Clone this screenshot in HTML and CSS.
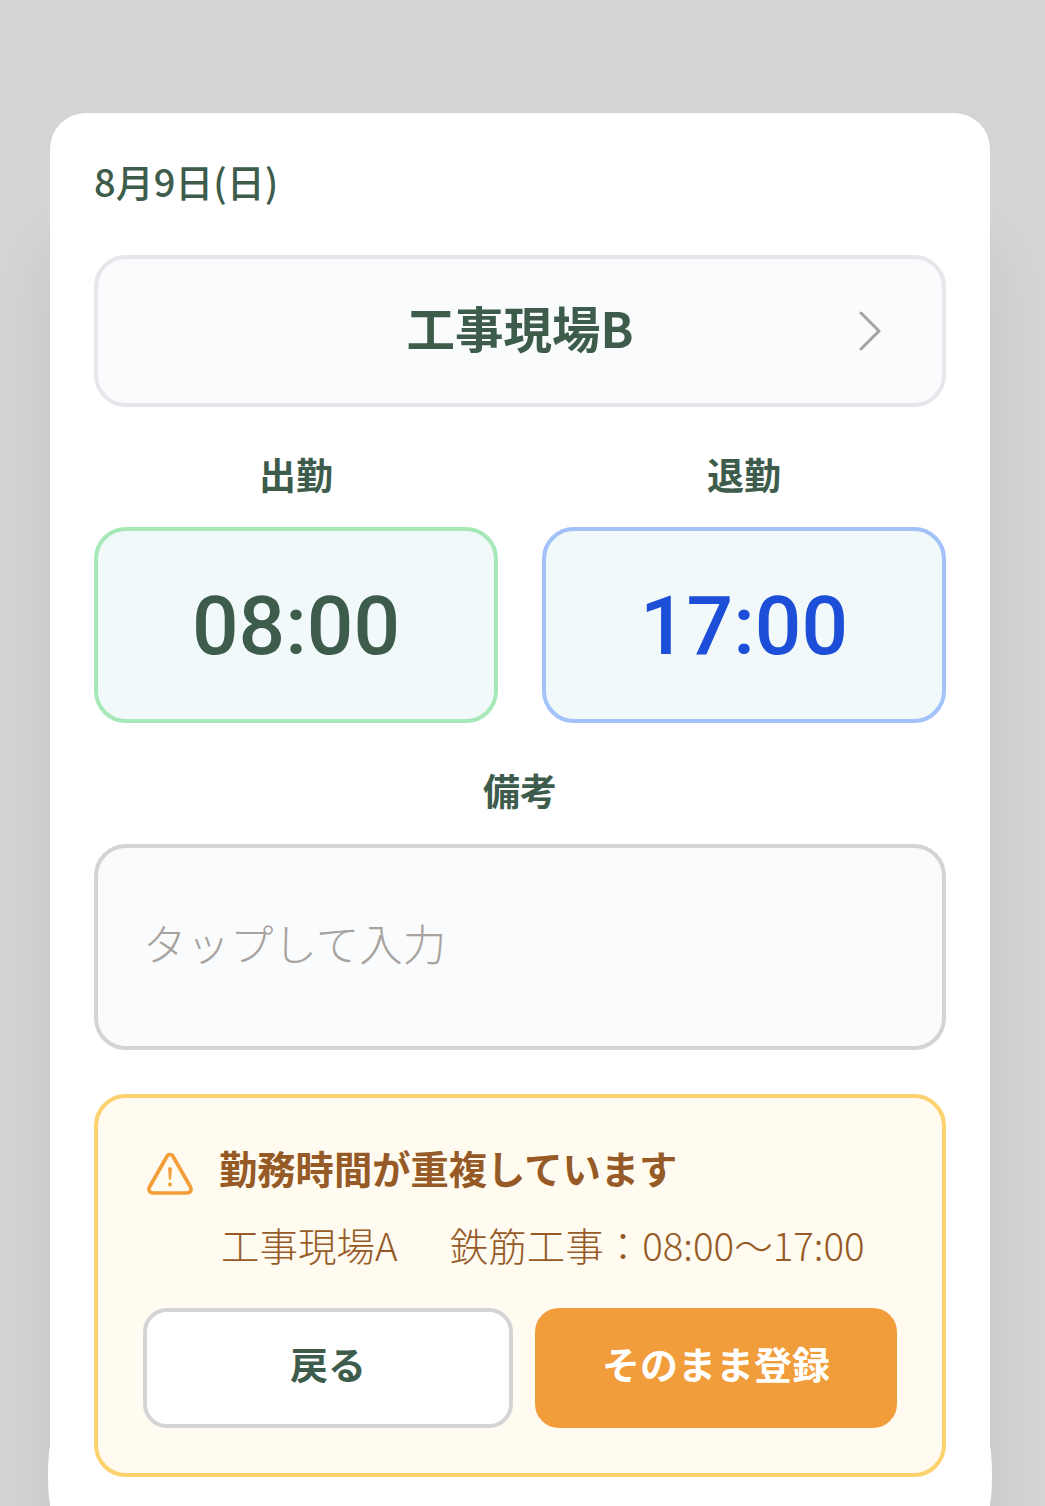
FILE: index.html
```html
<!DOCTYPE html>
<html lang="ja">
<head>
<meta charset="utf-8">
<title>勤務登録</title>
<link rel="stylesheet" href="styles.css">
</head>
<body>
<main class="card">
  <div class="date">8月9日(日)</div>
  <button class="site">
    <span class="site-name">工事現場B</span>
    <svg class="chevron" width="24" height="40" viewBox="0 0 24 40"><path d="M3 2 L21 20 L3 38" fill="none" stroke="#a8a29e" stroke-width="3" stroke-linecap="round" stroke-linejoin="round"/></svg>
  </button>
  <div class="times">
    <div class="time-col">
      <div class="label">出勤</div>
      <div class="time-box start">08:00</div>
    </div>
    <div class="time-col">
      <div class="label">退勤</div>
      <div class="time-box end">17:00</div>
    </div>
  </div>
  <div class="label note-label">備考</div>
  <div class="note">タップして入力</div>
  <section class="warning">
    <div class="warn-head">
      <svg class="warn-icon" width="46" height="43" viewBox="0 0 46 43"><path d="M20.500 3.500 Q23 1.500 25.500 3.500 L43.500 35 Q45.500 40.500 40 41 L6 41 Q0.500 40.500 2.500 35 Z" fill="none" stroke="#f29d38" stroke-width="3.600" stroke-linejoin="round"/><path d="M21 15.500 H25 L24 27.500 H22 Z" fill="#f29d38"/><circle cx="23" cy="32.500" r="2" fill="#f29d38"/></svg>
      <span class="warn-title">勤務時間が重複しています</span>
    </div>
    <div class="warn-detail"><span>工事現場A</span><span>鉄筋工事：08:00〜17:00</span></div>
    <div class="actions">
      <button class="btn back">戻る</button>
      <button class="btn go">そのまま登録</button>
    </div>
  </section>
</main>
</body>
</html>
```
FILE: styles.css
```css
* { box-sizing: border-box; }
html, body { margin: 0; height: 1506px; overflow: hidden; }
body {
  background: #d4d4d4;
  padding: 113px 55px 0 50px;
  font-family: "Noto Sans CJK JP", "Noto Sans", sans-serif;
  color: #3d5c4c;
}
button { font-family: inherit; color: inherit; margin: 0; }
.card {
  position: relative;
  height: 1460px;
  background: #fff;
  border-radius: 36px 36px 0 0;
  padding: 42px 44px 0;
  box-shadow: 0 130px 60px rgba(0,0,0,.075);
}
.card::after {
  content: "";
  position: absolute;
  left: -2px;
  right: -2px;
  top: 1332px;
  height: 60px;
  background: #fff;
  border-radius: 3px / 30px;
  z-index: 0;
}
.card > * { position: relative; z-index: 1; }
.date {
  font-size: 38px;
  font-weight: 500;
  line-height: 52px;
  margin-bottom: 48px;
}
.site {
  display: flex;
  align-items: center;
  justify-content: center;
  width: 100%;
  height: 152px;
  background: #f9fbfd;
  border: 4px solid #e5e7eb;
  border-radius: 32px;
  padding: 0 0 8px;
}
.site-name { font-size: 48.500px; font-weight: 700; line-height: 1; }
.chevron { position: absolute; right: 60px; top: 52px; }
.times { display: flex; gap: 44px; margin-top: 41px; }
.time-col { flex: 1; }
.label {
  font-size: 37px;
  font-weight: 700;
  line-height: 52px;
  text-align: center;
  margin-bottom: 27px;
}
.time-box {
  height: 196px;
  border: 4px solid #a7e8b8;
  border-radius: 32px;
  background: #f2f9fb;
  display: flex;
  align-items: center;
  justify-content: center;
  padding-top: 2px;
  font-family: Roboto, sans-serif;
  font-size: 82px;
  font-weight: 500;
  line-height: 1;
}
.end { border-color: #a3c2fa; color: #1d4ed8; }
.note-label { margin-top: 41px; margin-bottom: 28px; }
.note {
  height: 206px;
  background: #f9fbfd;
  border: 4px solid #d4d4d4;
  border-radius: 32px;
  padding: 0 48px 10px 45px;
  display: flex;
  align-items: center;
  font-size: 43.500px;
  font-weight: 300;
  color: #a8a29e;
}
.warning {
  margin-top: 44px;
  height: 383px;
  background: #fffbf0;
  border: 4px solid #fbd26e;
  border-radius: 32px;
  padding: 0 44px;
  color: #965a27;
}
.warn-head {
  display: flex;
  align-items: center;
  gap: 26px;
  height: 60px;
  margin-top: 40px;
}
.warn-icon { flex: none; margin-left: 5px; margin-top: 10px; }
.warn-title { font-size: 38.300px; font-weight: 700; line-height: 1; }
.warn-detail {
  display: flex;
  gap: 52px;
  padding-left: 79px;
  font-size: 38.500px;
  font-weight: 300;
  line-height: 52px;
  margin-top: 20px;
  white-space: nowrap;
}
.actions { display: flex; gap: 22px; margin-top: 38px; padding-left: 1px; }
.btn {
  height: 120px;
  border-radius: 24px;
  font-size: 38px;
  font-weight: 700;
  padding: 0 0 12px;
}
.back { width: 370px; background: #fff; border: 4px solid #d4d4d4; color: #3d5c4c; }
.go { width: 362px; background: #f19d3c; border: 0; color: #fff; }
```
